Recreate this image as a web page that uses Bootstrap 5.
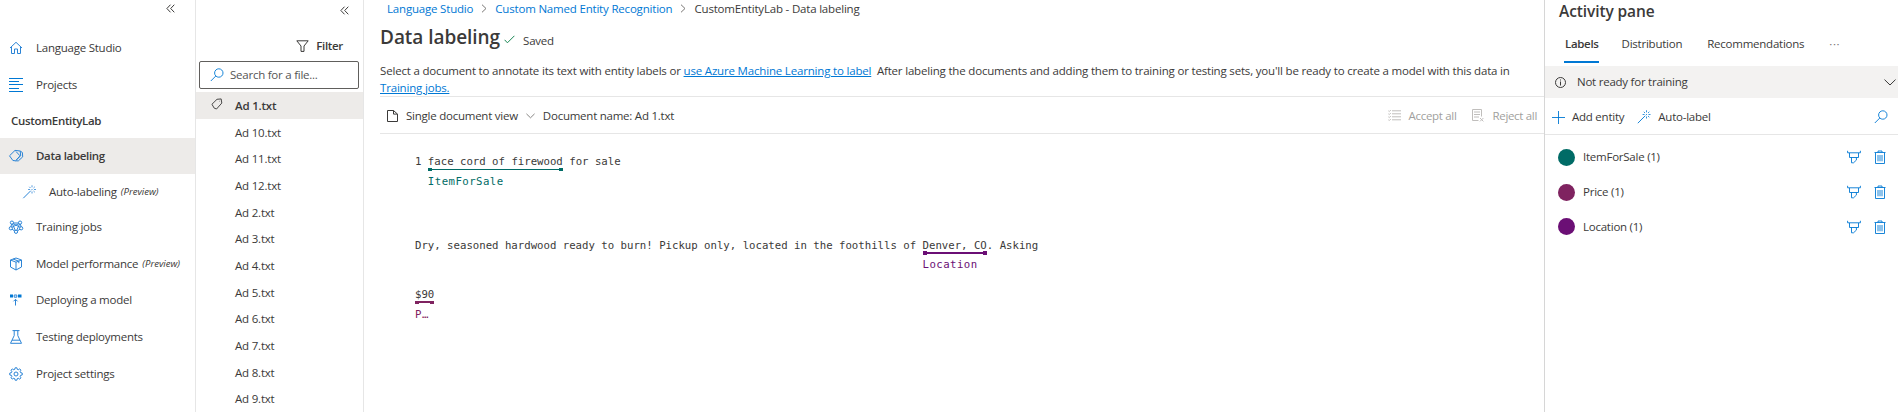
<!DOCTYPE html>
<html lang="en">
<head>
<meta charset="utf-8">
<meta name="viewport" content="width=device-width, initial-scale=1">
<title>Data labeling - Language Studio</title>
<link href="https://cdn.jsdelivr.net/npm/bootstrap@5.3.0/dist/css/bootstrap.min.css" rel="stylesheet">
<script defer src="https://cdn.jsdelivr.net/npm/bootstrap@5.3.0/dist/js/bootstrap.bundle.min.js"></script>
<style>
body{font:11.5px/16px "Open Sans","Noto Sans",sans-serif;color:#3b3a39;letter-spacing:-.24px;background:#fff}
a,.az{color:#0078d4}
svg{flex:none;fill:none;stroke:currentColor;stroke-width:1;display:block}
svg.az{stroke-width:.9}
.semi{font-weight:600;letter-spacing:-.32px}
.shell{height:412px}
.pane-nav{width:196px;border-right:1px solid #e6e6e6}
.pane-files{width:168px;border-right:1px solid #e6e6e6}
.pane-activity{width:354px;border-left:1px solid #d6d6d6}
.nav-top{height:30px;padding:1px 20px 0 0}
.nav-row{height:36.3px;padding-left:8px;color:inherit;text-decoration:none}
.nav-row svg{margin-right:12px;color:#2b84d6}
.nav-row.sub{padding-left:22px}
.nav-row.low{padding-top:1px}
.nav-row.high{padding-bottom:2px}
.nav-head{height:35px;padding-left:11px;padding-top:1px}
.nav-row i{font-size:9.6px;letter-spacing:-.02px;margin-left:4px}
.picked{background:#edebe9}
.file-top{height:32px;padding:0 14px 12px 0}
.file-filter{height:28px;padding-right:20px;gap:7px}
.file-find{height:28px;margin:1px 4px 3px 3px;border:1px solid #605e5c;border-radius:2px;padding-left:10px;gap:6px;color:#555}
.file-row{height:26.7px;padding:1px 0 0 15px;letter-spacing:-.2px}
.file-row svg,.file-row b{width:12px;margin-right:12px}
.main{padding-left:16px}
.crumbs{height:19px;padding:0 0 2px 7px;letter-spacing:-.19px}
.crumbs svg,.chev{color:#797775}
.crumbs a{text-decoration:none}
h1{font-size:19px;line-height:24px;font-weight:600;letter-spacing:-.05px;margin:0}
.title{height:36px}
.intro{height:42px;padding-top:7px;line-height:17px;letter-spacing:-.18px;border-bottom:1px solid #e6e6e6;white-space:nowrap}
.tools{height:37px;padding-left:7px;padding-top:1px;border-bottom:1px solid #e6e6e6}
.off{color:#a19f9d;letter-spacing:-.32px}
.off svg{color:#c0bebc}
.off:last-child{margin-right:7px}
.doc{font:10.7px/14px "DejaVu Sans Mono",monospace;letter-spacing:-.01px;padding:21px 0 0 35px;white-space:pre}
.line2{margin-top:70px}
.line3{margin-top:35px}
.tagged{position:relative}
.tagged em{position:absolute;left:0;right:0;top:14px;border-top:1px solid;font-style:normal;color:var(--c);padding-top:5px;line-height:14px;letter-spacing:.45px}
.violet em,.plum em{top:13px;border-top-width:2px;padding-top:4px}
.plum em{padding-top:5px}
.tagged em::before,.tagged em::after{content:"";position:absolute;top:-2px;width:4px;height:3px;background:var(--c)}
.violet em::before,.violet em::after{top:-3px;height:4px}
.plum em::before,.plum em::after{top:-2px;height:3px}
.tagged em::before{left:0}.tagged em::after{right:0}
.teal{--c:#006b66}.plum{--c:#7f2360}.violet{--c:#6b0f75}
.act-title{font-size:15.5px;letter-spacing:-.1px;line-height:20px;padding:1px 0 0 14px;height:27px}
.tabs{height:39px;padding-left:19px}
.tabs span{height:36px;padding-top:9px}
.tabs .on{border-bottom:2px solid #0078d4;padding-left:1px}
.tabs .dist{margin-left:23px}
.tabs .reco{margin-left:25px}
.tabs .more{margin-left:25px;letter-spacing:.6px;color:#797775}
.status{height:32px;background:#f3f2f1;padding:0 2px 0 10px}
.status span{margin-left:11px}
.cmds{height:37px;padding:2px 10px 0 7px;border-bottom:1px solid #e6e6e6}
.cmds span{margin-left:7px}
.cmds .wand{margin:0 7px 0 13px}
.ents{padding-top:5px}
.ent{height:34.8px;padding:0 12px 0 13px}
.ent svg.mk{margin:0 13px 0 auto}
.dot{width:17px;height:17px;border-radius:50%;margin-right:8px;background:var(--c)}
</style>
</head>
<body class="overflow-hidden">
<svg class="d-none">
<symbol id="wand" viewBox="0 0 14 14"><path d="M.8 13.2 8.3 5.7"/><path stroke-width=".8" d="M9.5.3v2M9.5 6.5v2M5.6 4.5h2M11.5 4.5h2M6.8 1.8l1.2 1.2M12.3 1.8 11 3M12.3 7.2 11 6M9 4.5h1"/></symbol>
<symbol id="lens" viewBox="0 0 14 14"><circle cx="8.8" cy="5" r="4.2"/><path d="M5.8 8 .8 13"/></symbol>
<symbol id="dbl" viewBox="0 0 9 9"><path d="M4.5.7.9 4.5l3.6 3.8M8.3.7 4.7 4.5l3.6 3.8"/></symbol>
<symbol id="marker" viewBox="0 0 14 14"><path d="M.6.8v2h12.8v-2M2.5 3v4.5h9V3M4.5 7.5v5.3h2l2.900-2.700V7.500"/></symbol>
<symbol id="bin" viewBox="0 0 12 14"><path d="M.5 2.5h11M4 2.4V1h4v1.4M1.5 2.8v10.7h9V2.8M4 5v6.3M6 5v6.3M8 5v6.3"/></symbol>
</svg>
<div class="shell d-flex">
  <nav class="pane-nav flex-shrink-0 text-nowrap">
    <div class="nav-top d-flex justify-content-end align-items-start pt-1"><svg width="9" height="9"><use href="#dbl"/></svg></div>
    <a href="#" class="nav-row d-flex align-items-center"><svg width="16" height="14" viewBox="0 0 16 14"><path d="M2 7 8 1.3 14 7M3.5 6v6.5h3V8h3v4.5h3V6"/></svg>Language Studio</a>
    <a href="#" class="nav-row low d-flex align-items-center"><svg width="16" height="14" viewBox="0 0 16 14"><path stroke="#0078d4" d="M1 .5h14M1 3.5h10M1 6.5h14M1 10.5h10M1 13.5h14"/></svg>Projects</a>
    <div class="nav-head semi d-flex align-items-center">CustomEntityLab</div>
    <a href="#" class="nav-row low picked semi d-flex align-items-center"><svg width="16" height="14" viewBox="0 0 16 14"><path d="M1.5 6.8 7 1.4l5.2.6.5 4.8-5.2 5-2.6-.3zM12.2 2l2.2 1.5.3 4.4-4.4 4-2.8-.1M8 2.5l4 4.3-3.5 4"/></svg>Data labeling</a>
    <a href="#" class="nav-row sub d-flex align-items-center"><svg width="15" height="14"><use href="#wand"/></svg>Auto-labeling <i>(Preview)</i></a>
    <a href="#" class="nav-row high d-flex align-items-center"><svg width="16" height="14" viewBox="0 0 16 14"><path d="M4 3h8l1.5 5-5.5 4L2.5 8zM4 3l4 9 4-9M2.5 8 12 3M13.5 8 4 3"/><path fill="#fff" d="M3.9 1a1.6 1.6 0 1 1 0 3.2 1.6 1.6 0 0 1 0-3.2M12.1 1a1.6 1.6 0 1 1 0 3.2 1.6 1.6 0 0 1 0-3.2M2.8 6.7a1.6 1.6 0 1 1 0 3.2 1.6 1.6 0 0 1 0-3.2M13.2 6.7a1.6 1.6 0 1 1 0 3.2 1.6 1.6 0 0 1 0-3.2M8 10.2a1.6 1.6 0 1 1 0 3.2 1.6 1.6 0 0 1 0-3.2"/></svg>Training jobs</a>
    <a href="#" class="nav-row high d-flex align-items-center"><svg width="16" height="14" viewBox="0 0 16 14"><path d="M8 1l5.5 2v7L8 13 2.5 10V3zM2.5 3 8 5.2 13.5 3M8 5.2V13M5 2l5.8 2.2v2"/></svg>Model performance <i>(Preview)</i></a>
    <a href="#" class="nav-row high d-flex align-items-center"><svg width="16" height="14" viewBox="0 0 16 14"><path d="M7.5 12.5V6.5M5.5 8.3l2-2 2 2M6.2 2h2.6v2.2H6.2z"/><path fill="#0078d4" stroke="none" d="M2 1.5h3v3H2zM10 1.5h3.5v3H10z"/></svg>Deploying a model</a>
    <a href="#" class="nav-row d-flex align-items-center"><svg width="16" height="14" viewBox="0 0 16 14"><path d="M4.5.6h7M6.2.6v5L2.5 13.3h11L9.8 5.6v-5M4 10.2h8"/></svg>Testing deployments</a>
    <a href="#" class="nav-row d-flex align-items-center"><svg width="16" height="14" viewBox="0 0 16 14"><circle cx="8" cy="7" r="2"/><path d="M7.1.8h1.8l.4 1.6.9.4 1.5-.9 1.3 1.3-.9 1.5.4.9 1.7.4v2l-1.7.4-.4.9.9 1.5-1.3 1.3-1.5-.9-.9.4-.4 1.6H7.1l-.4-1.6-.9-.4-1.5.9L3 10.8l.9-1.5-.4-.9L1.8 8V6l1.7-.4.4-.9L3 3.2l1.3-1.3 1.5.9.9-.4z"/></svg>Project settings</a>
  </nav>

  <section class="pane-files flex-shrink-0 text-nowrap">
    <div class="file-top d-flex justify-content-end align-items-center"><svg width="9" height="9"><use href="#dbl"/></svg></div>
    <div class="file-filter d-flex justify-content-end align-items-center"><svg width="13" height="12" viewBox="0 0 13 12"><path d="M.8.8h11.4L8 6v5.4H5V6z"/></svg><span class="semi">Filter</span></div>
    <div class="file-find d-flex align-items-center"><svg class="az" width="14" height="14"><use href="#lens"/></svg>Search for a file...</div>
    <div class="file-row picked semi d-flex align-items-center"><svg class="mb-1" width="12" height="12" viewBox="0 0 13 13"><path d="M1 6.8 6.5 1.4 11 1l.7 4.5L6 11.9 3.5 11zM9.3 3.5h.5"/></svg>Ad 1.txt</div>
    <div class="file-row d-flex align-items-center"><b></b>Ad 10.txt</div>
    <div class="file-row d-flex align-items-center"><b></b>Ad 11.txt</div>
    <div class="file-row d-flex align-items-center"><b></b>Ad 12.txt</div>
    <div class="file-row d-flex align-items-center"><b></b>Ad 2.txt</div>
    <div class="file-row d-flex align-items-center"><b></b>Ad 3.txt</div>
    <div class="file-row d-flex align-items-center"><b></b>Ad 4.txt</div>
    <div class="file-row d-flex align-items-center"><b></b>Ad 5.txt</div>
    <div class="file-row d-flex align-items-center"><b></b>Ad 6.txt</div>
    <div class="file-row d-flex align-items-center"><b></b>Ad 7.txt</div>
    <div class="file-row d-flex align-items-center"><b></b>Ad 8.txt</div>
    <div class="file-row d-flex align-items-center"><b></b>Ad 9.txt</div>
  </section>

  <main class="main flex-grow-1">
    <div class="crumbs d-flex align-items-center"><a href="#">Language Studio</a><svg class="mx-2" width="6" height="9" viewBox="0 0 6 9"><path d="M1 .7l4 3.8-4 3.8"/></svg><a href="#">Custom Named Entity Recognition</a><svg class="mx-2" width="6" height="9" viewBox="0 0 6 9"><path d="M1 .7l4 3.8-4 3.8"/></svg><span>CustomEntityLab - Data labeling</span></div>
    <div class="title d-flex align-items-center"><h1>Data labeling</h1><svg class="ms-1 me-2 mt-1 text-success" width="11" height="9" viewBox="0 0 11 9"><path d="M.6 4.8 3.4 7.8 10.4.8"/></svg><span class="mt-2">Saved</span></div>
    <div class="intro">Select a document to annotate its text with entity labels or <a href="#">use Azure Machine Learning to label</a>&nbsp; After labeling the documents and adding them to training or testing sets, you'll be ready to create a model with this data in<br><a href="#">Training jobs.</a></div>
    <div class="tools d-flex align-items-center">
      <svg width="11" height="12" viewBox="0 0 11 12"><path d="M.5.5h6l4 3.6v7.4H.5zM6.5.5v3.6h4"/></svg><span class="ms-2">Single document view</span>
      <svg class="chev ms-2" width="9" height="6" viewBox="0 0 10 6"><path d="M.5.6 5 5 9.5.6"/></svg><span class="ms-2">Document name: Ad 1.txt</span>
      <span class="off ms-auto d-flex align-items-center"><svg class="me-2" width="13" height="11" viewBox="0 0 13 11"><path d="M4 .8h9M4 3.8h9M4 6.8h9M4 9.8h9M.4.8l.9.8L2.8 0M.4 3.8l.9.8L2.8 3M.4 6.8l.9.8L2.8 6M.4 9.8l.9.8L2.8 9"/></svg>Accept all</span>
      <span class="off ms-3 d-flex align-items-center"><svg class="me-2" width="12" height="13" viewBox="0 0 12 13"><path d="M6.5 11.5h-6V.5h9v7M2 3h6M2 5.5h6M2 8h5M8 9l3.4 3.4M11.4 9 8 12.4"/></svg>Reject all</span>
    </div>
    <div class="doc"><div>1 <span class="tagged teal">face cord of firewood<em>ItemForSale</em></span> for sale</div><div class="line2">Dry, seasoned hardwood ready to burn! Pickup only, located in the foothills of <span class="tagged violet">Denver, CO<em>Location</em></span>. Asking</div><div class="line3"><span class="tagged plum">$90<em>P…</em></span></div></div>
  </main>

  <aside class="pane-activity flex-shrink-0 text-nowrap">
    <div class="act-title semi">Activity pane</div>
    <div class="tabs d-flex"><span class="on semi">Labels</span><span class="dist">Distribution</span><span class="reco">Recommendations</span><span class="more">···</span></div>
    <div class="status d-flex align-items-center"><svg width="11" height="11" viewBox="0 0 11 11"><circle cx="5.5" cy="5.5" r="5"/><path d="M5.5 4.5v4M5.5 2.5v1"/></svg><span>Not ready for training</span><svg class="ms-auto" width="12" height="7" viewBox="0 0 12 7"><path d="M.5.6 6 6 11.5.6"/></svg></div>
    <div class="cmds d-flex align-items-center"><svg class="az" width="13" height="13" viewBox="0 0 13 13"><path d="M6.5 0v13M0 6.5h13"/></svg><span>Add entity</span><svg class="az wand" width="14" height="14"><use href="#wand"/></svg>Auto-label<svg class="az ms-auto" width="14" height="14"><use href="#lens"/></svg></div>
    <div class="ents">
      <div class="ent d-flex align-items-center teal"><span class="dot"></span>ItemForSale (1)<svg class="az mk" width="14" height="14"><use href="#marker"/></svg><svg class="az" width="12" height="14"><use href="#bin"/></svg></div>
      <div class="ent d-flex align-items-center plum"><span class="dot"></span>Price (1)<svg class="az mk" width="14" height="14"><use href="#marker"/></svg><svg class="az" width="12" height="14"><use href="#bin"/></svg></div>
      <div class="ent d-flex align-items-center violet"><span class="dot"></span>Location (1)<svg class="az mk" width="14" height="14"><use href="#marker"/></svg><svg class="az" width="12" height="14"><use href="#bin"/></svg></div>
    </div>
  </aside>
</div>
</body>
</html>
